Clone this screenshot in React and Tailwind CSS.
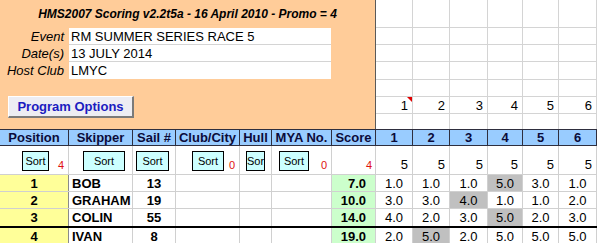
import React from 'react';

const results = [
  { pos: 1, name: 'BOB', sail: 13, score: '7.0', races: ['1.0', '1.0', '1.0', '5.0', '3.0', '1.0'], drop: 3 },
  { pos: 2, name: 'GRAHAM', sail: 19, score: '10.0', races: ['3.0', '3.0', '4.0', '1.0', '1.0', '2.0'], drop: 2 },
  { pos: 3, name: 'COLIN', sail: 55, score: '14.0', races: ['4.0', '2.0', '3.0', '5.0', '2.0', '3.0'], drop: 3 },
  { pos: 4, name: 'IVAN', sail: 8, score: '19.0', races: ['2.0', '5.0', '2.0', '5.0', '5.0', '5.0'], drop: 1 },
];

const headers = ['Position', 'Skipper', 'Sail #', 'Club/City', 'Hull', 'MYA No.', 'Score', '1', '2', '3', '4', '5', '6'];
const cols = 'grid grid-cols-[69px_64px_43px_64px_32px_60px_44px_37px_37px_38px_35px_36px_38px]';
const topRows = ['h-[28px]', 'h-[17px]', 'h-[17px]', 'h-[18px]', 'h-[17px]', 'h-[17px]', 'h-[15px]'];

function SortBtn({ className, label = 'Sort' }) {
  return (
    <div className={`mt-[5px] h-[20px] flex items-center justify-center overflow-hidden whitespace-nowrap bg-[#CCFFFF] border border-black text-[11px] ${className}`}>
      {label}
    </div>
  );
}

export default function App() {
  return (
    <div className="w-[597px] h-[243px] overflow-hidden bg-white text-black font-['Liberation_Sans',Arial,sans-serif] text-[13px] leading-none">
      {/* Top: info panel + empty sheet cells */}
      <div className="flex h-[129px]">
        <div className="w-[376px] shrink-0 bg-[#FFCC99] border-r border-[#5a5a5a] flex flex-col">
          <div className="h-[28px] flex items-center justify-center text-[12px] font-bold italic">
            HMS2007 Scoring v2.2t5a - 16 April 2010 - Promo = 4
          </div>
          {[
            ['Event', 'RM SUMMER SERIES RACE 5'],
            ['Date(s)', '13 JULY 2014'],
            ['Host Club', 'LMYC'],
          ].map(([label, value], i) => (
            <div key={label} className="grid grid-cols-[69px_262px] h-[17px]">
              <div className="italic text-right pr-[5px] flex items-center justify-end">{label}</div>
              <div className={`bg-white pl-[2px] flex items-center ${i < 2 ? 'border-b border-[#d4d4d4]' : ''}`}>{value}</div>
            </div>
          ))}
          <button className="mt-[17px] ml-[8px] w-[126px] h-[22px] bg-[#EDEDF3] border border-t-white border-l-white border-r-[#7a7a7a] border-b-[#7a7a7a] border-r-2 border-b-2 text-[#1c1cc0] font-bold text-[13px] flex items-center justify-center">
            Program Options
          </button>
        </div>
        <div className="grid grid-cols-[37px_37px_38px_35px_36px_38px] content-start">
          {topRows.map((h, r) =>
            [0, 1, 2, 3, 4, 5].map((c) => (
              <div
                key={`${r}-${c}`}
                className={`${h} relative border-r border-[#d4d4d4] ${r < 6 ? 'border-b' : ''} flex items-center justify-end pr-[4px]`}
              >
                {r === 5 && c + 1}
                {r === 5 && c === 0 && (
                  <span className="absolute top-0 right-0 w-0 h-0 border-l-[5px] border-l-transparent border-t-[5px] border-t-[#e00000]" />
                )}
              </div>
            ))
          )}
        </div>
      </div>

      {/* Header row */}
      <div className={`${cols} h-[17px] bg-[#99CCFF] border-y border-[#2e2e3e]`}>
        {headers.map((h) => (
          <div key={h} className="border-r border-[#2e2e3e] flex items-center justify-center font-bold text-[#0b0b3a] whitespace-nowrap overflow-hidden">
            {h}
          </div>
        ))}
      </div>

      {/* Sort row */}
      <div className={`${cols} h-[29px] border-b border-[#d0d0d0]`}>
        <div className="flex border-r border-[#d0d0d0]">
          <SortBtn className="ml-[22px] w-[27px]" />
          <span className="ml-auto self-end pb-[3px] pr-[4px] text-[11px] text-[#e01010]">4</span>
        </div>
        <div className="flex border-r border-[#d0d0d0]"><SortBtn className="ml-[14px] w-[42px]" /></div>
        <div className="flex border-r border-[#d0d0d0]"><SortBtn className="ml-[3px] w-[33px]" /></div>
        <div className="flex border-r border-[#d0d0d0]">
          <SortBtn className="ml-[16px] w-[32px]" />
          <span className="ml-auto self-end pb-[3px] pr-[4px] text-[11px] text-[#e01010]">0</span>
        </div>
        <div className="flex border-r border-[#d0d0d0]"><SortBtn label="Sor" className="ml-[6px] w-[19px]" /></div>
        <div className="flex border-r border-[#d0d0d0]">
          <SortBtn className="ml-[7px] w-[30px]" />
          <span className="ml-auto self-end pb-[3px] pr-[4px] text-[11px] text-[#e01010]">0</span>
        </div>
        <div className="flex justify-end border-r border-[#d0d0d0]">
          <span className="self-end pb-[3px] pr-[3px] text-[11px] text-[#e01010]">4</span>
        </div>
        {[0, 1, 2, 3, 4, 5].map((c) => (
          <div key={c} className="flex items-end justify-end pb-[3px] pr-[4px] border-r border-[#d0d0d0]">5</div>
        ))}
      </div>

      {/* Results */}
      {results.map((row, i) => (
        <div
          key={row.pos}
          className={`${cols} ${i === 2 ? 'h-[19px] border-b-2 border-black' : 'h-[17px] border-b border-[#d0d0d0]'}`}
        >
          <div className="bg-[#FFFF99] border-r border-[#8a8a8a] flex items-center justify-center font-bold">{row.pos}</div>
          <div className="border-r border-[#d0d0d0] flex items-center pl-[3px] font-bold">{row.name}</div>
          <div className="border-r border-[#d0d0d0] flex items-center justify-center font-bold">{row.sail}</div>
          <div className="border-r border-[#d0d0d0]" />
          <div className="border-r border-[#d0d0d0]" />
          <div className="border-r border-[#d0d0d0]" />
          <div className="bg-[#CCFFCC] border-r border-[#d0d0d0] flex items-center justify-end pr-[9px] font-bold">{row.score}</div>
          {row.races.map((v, c) => (
            <div
              key={c}
              className={`border-r border-[#d0d0d0] flex items-center justify-center ${c === row.drop ? 'bg-[#C0C0C0]' : ''}`}
            >
              {v}
            </div>
          ))}
        </div>
      ))}
    </div>
  );
}
